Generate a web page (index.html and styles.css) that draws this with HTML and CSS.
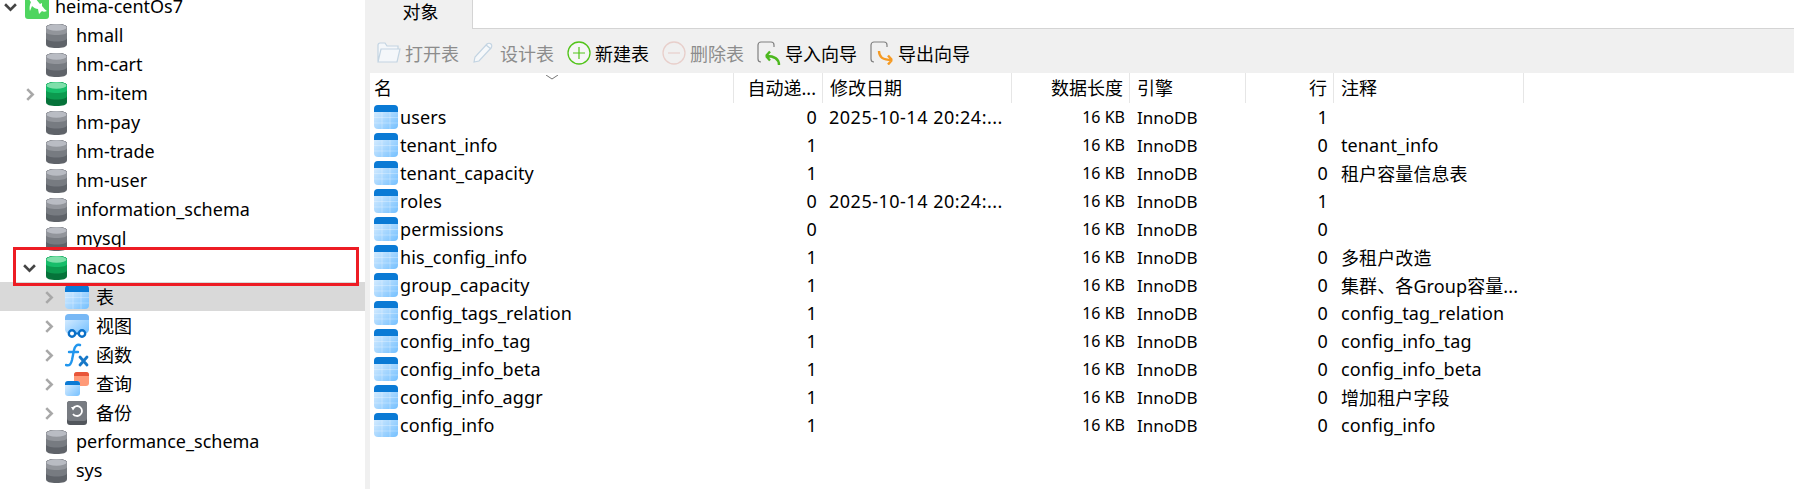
FILE: index.html
```
<!DOCTYPE html>
<html lang="zh-CN">
<head>
    <meta charset="UTF-8">
    <title>nacos</title>
    <link rel="stylesheet" href="styles.css">
</head>
<body>
    <svg class="defs" width="0" height="0">
        <defs>
            <linearGradient id="cellFill" x1="0" y1="0" x2="1" y2="1">
                <stop offset="0" stop-color="#e4f2ff"/>
                <stop offset="1" stop-color="#74c0ff"/>
            </linearGradient>
            <symbol id="db-gray" viewBox="0 0 21 24">
                <path d="M0 4C0 1 4 0 10.5 0S21 1 21 4v16c0 3-4 4-10.5 4S0 23 0 20z" fill="#5f6369"/>
                <path d="M0 4C0 1 4 0 10.5 0S21 1 21 4v10c0 2-4 3.500-10.500 3.500S0 16 0 14z" fill="#777b81"/>
                <path d="M0 4C0 1 4 0 10.5 0S21 1 21 4v4c0 2-4 3-10.500 3S0 10 0 8z" fill="#92959b"/>
                <ellipse cx="10.500" cy="3.500" rx="10" ry="3.200" fill="#b9bcc3"/>
            </symbol>
            <symbol id="db-green" viewBox="0 0 21 24">
                <path d="M0 4C0 1 4 0 10.5 0S21 1 21 4v16c0 3-4 4-10.500 4S0 23 0 20z" fill="#06733a"/>
                <path d="M0 4C0 1 4 0 10.5 0S21 1 21 4v10c0 2-4 3.500-10.500 3.500S0 16 0 14z" fill="#0c9a4f"/>
                <path d="M0 4C0 1 4 0 10.5 0S21 1 21 4v4c0 2-4 3-10.500 3S0 10 0 8z" fill="#17bd6a"/>
                <ellipse cx="10.500" cy="3.500" rx="10" ry="3.200" fill="#7fdfaa"/>
            </symbol>
            <symbol id="tbl" viewBox="0 0 24 24">
                <rect width="24" height="24" rx="4" fill="url(#cellFill)"/>
                <path d="M0 7V4a4 4 0 0 1 4-4h16a4 4 0 0 1 4 4v3z" fill="#0a7ad5"/>
                <path d="M8 7v17M16 7v17M0 12.500h24M0 18h24" stroke="#fff" stroke-opacity=".28" fill="none"/>
            </symbol>
        </defs>
    </svg>

    <div class="app">
        <aside class="tree">
            <div class="node">
                <svg class="chev open" viewBox="0 0 12 8"><path d="M1 1l5 5 5-5"/></svg>
                <svg class="ico-conn" viewBox="0 0 24 24">
                    <rect width="24" height="24" rx="3" fill="#4fd55f"/>
                    <path d="M3 2c2-1 5 0 7 1 2 2 3 4 5 6l2-1v3c2 2 3 4 5 5-2 1-4 1-5 0l-3 3-1-5c-2 0-4-1-6-3l-2 5C4 13 5 9 6 7 5 6 4 4 3 2z" fill="#fff"/>
                </svg>
                <span class="name">heima-centOs7</span>
            </div>
            <div class="node db"><svg class="ico-db"><use href="#db-gray"/></svg><span class="name">hmall</span></div>
            <div class="node db"><svg class="ico-db"><use href="#db-gray"/></svg><span class="name">hm-cart</span></div>
            <div class="node db"><svg class="chev" viewBox="0 0 8 12"><path d="M1 1l5 5-5 5"/></svg><svg class="ico-db"><use href="#db-green"/></svg><span class="name">hm-item</span></div>
            <div class="node db"><svg class="ico-db"><use href="#db-gray"/></svg><span class="name">hm-pay</span></div>
            <div class="node db"><svg class="ico-db"><use href="#db-gray"/></svg><span class="name">hm-trade</span></div>
            <div class="node db"><svg class="ico-db"><use href="#db-gray"/></svg><span class="name">hm-user</span></div>
            <div class="node db"><svg class="ico-db"><use href="#db-gray"/></svg><span class="name">information_schema</span></div>
            <div class="node db"><svg class="ico-db"><use href="#db-gray"/></svg><span class="name">mysql</span></div>
            <div class="node db"><svg class="chev open" viewBox="0 0 12 8"><path d="M1 1l5 5 5-5"/></svg><svg class="ico-db"><use href="#db-green"/></svg><span class="name">nacos</span></div>
            <div class="node sub selected">
                <svg class="chev" viewBox="0 0 8 12"><path d="M1 1l5 5-5 5"/></svg>
                <svg class="ico-sub"><use href="#tbl"/></svg>
                <span class="label">表</span>
            </div>
            <div class="node sub">
                <svg class="chev" viewBox="0 0 8 12"><path d="M1 1l5 5-5 5"/></svg>
                <svg class="ico-sub" viewBox="0 0 24 24">
                    <path d="M0 16V4a4 4 0 0 1 4-4h16a4 4 0 0 1 4 4v12a6 6 0 0 1-2 3H2a6 6 0 0 1-2-3z" fill="url(#cellFill)"/>
                    <path d="M0 6V4a4 4 0 0 1 4-4h16a4 4 0 0 1 4 4v2z" fill="#78b8f5"/>
                    <circle cx="7" cy="19.500" r="3.200" fill="#fff" stroke="#0a70c8" stroke-width="2.400"/>
                    <circle cx="17" cy="19.500" r="3.200" fill="#fff" stroke="#0a70c8" stroke-width="2.400"/>
                    <path d="M10 19.500h4" stroke="#0a70c8" stroke-width="2"/>
                </svg>
                <span class="label">视图</span>
            </div>
            <div class="node sub">
                <svg class="chev" viewBox="0 0 8 12"><path d="M1 1l5 5-5 5"/></svg>
                <svg class="ico-sub" viewBox="0 0 24 24">
                    <path d="M1 22c4 1 5-1 6-5l2-10c1-4 3-6 6-5M4 9h9" fill="none" stroke="#2196ee" stroke-width="2.400" stroke-linecap="round"/>
                    <path d="M15 14l7 8M22 14l-7 8" fill="none" stroke="#1778c8" stroke-width="2.800" stroke-linecap="round"/>
                </svg>
                <span class="label">函数</span>
            </div>
            <div class="node sub">
                <svg class="chev" viewBox="0 0 8 12"><path d="M1 1l5 5-5 5"/></svg>
                <svg class="ico-sub" viewBox="0 0 24 24">
                    <rect x="9" y="0" width="15" height="14" rx="3" fill="#ff9a78"/>
                    <path d="M9 4V3a3 3 0 0 1 3-3h9a3 3 0 0 1 3 3v1z" fill="#e8563a"/>
                    <rect x="0" y="9" width="15" height="15" rx="3" fill="#fff"/>
                    <rect x="0" y="9" width="15" height="15" rx="3" fill="url(#cellFill)"/>
                    <path d="M0 13v-1a3 3 0 0 1 3-3h9a3 3 0 0 1 3 3v1z" fill="#0a7ad5"/>
                </svg>
                <span class="label">查询</span>
            </div>
            <div class="node sub">
                <svg class="chev" viewBox="0 0 8 12"><path d="M1 1l5 5-5 5"/></svg>
                <svg class="ico-sub" viewBox="0 0 24 24">
                    <rect x="2" y="0" width="20" height="24" rx="3" fill="#52565c"/>
                    <rect x="2" y="0" width="20" height="20" rx="3" fill="#777b81"/>
                    <path d="M8 7a5 5 0 1 1 0 6" fill="none" stroke="#fff" stroke-width="1.800"/>
                    <path d="M6 6h4.500L8 9.500z" fill="#fff"/>
                </svg>
                <span class="label">备份</span>
            </div>
            <div class="node db"><svg class="ico-db"><use href="#db-gray"/></svg><span class="name">performance_schema</span></div>
            <div class="node db"><svg class="ico-db"><use href="#db-gray"/></svg><span class="name">sys</span></div>
            <div class="node"><span class="next-conn"></span></div>
        </aside>

        <main class="panel">
            <div class="tabs"><div class="tab">对象</div><div class="tab-rest"></div></div>
            <div class="toolbar">
                <div class="tool off">
                    <svg class="ico-tool" viewBox="0 0 24 22">
                        <path d="M1 19V3a2 2 0 0 1 2-2h5l2 3h11v3M1 20l3-13h19l-3 13z" fill="#f4f7fa" stroke="#c3d4e2" stroke-width="1.200"/>
                    </svg>
                    <span>打开表</span>
                </div>
                <div class="tool off">
                    <svg class="ico-tool" viewBox="0 0 24 22">
                        <path d="M2 20l1-5L15 2c1-1 3-1 4 0s1 3 0 4L7 19z" fill="#f6f8fa" stroke="#c3d4e2" stroke-width="1.200"/>
                        <path d="M14 3l5 4" stroke="#c3d4e2" stroke-width="1.200"/>
                    </svg>
                    <span>设计表</span>
                </div>
                <div class="tool">
                    <svg class="ico-tool" viewBox="0 0 24 24">
                        <circle cx="12" cy="12" r="11" fill="#fff" fill-opacity=".4" stroke="#52c41a" stroke-width="1.300"/>
                        <path d="M12 6v12M6 12h12" stroke="#52c41a" stroke-width="1.200"/>
                    </svg>
                    <span>新建表</span>
                </div>
                <div class="tool off">
                    <svg class="ico-tool" viewBox="0 0 24 24">
                        <circle cx="12" cy="12" r="11" fill="none" stroke="#e8cfcb" stroke-width="1.300"/>
                        <path d="M6 12h12" stroke="#e8cfcb" stroke-width="1.200"/>
                    </svg>
                    <span>删除表</span>
                </div>
                <div class="tool">
                    <svg class="ico-tool" viewBox="0 0 24 24">
                        <path d="M1 18V4a3 3 0 0 1 3-3h10a3 3 0 0 1 3 3v2M1 18a3 3 0 0 0 3 3" fill="none" stroke="#808080" stroke-width="1.200"/>
                        <path d="M22 24c0-6-4-9-13-9M9 15l4-4.500M9 15l4 4.500" fill="none" stroke="#4cb81e" stroke-width="2.400"/>
                    </svg>
                    <span>导入向导</span>
                </div>
                <div class="tool">
                    <svg class="ico-tool" viewBox="0 0 24 24">
                        <path d="M1 18V4a3 3 0 0 1 3-3h10a3 3 0 0 1 3 3v2M1 18a3 3 0 0 0 3 3" fill="none" stroke="#808080" stroke-width="1.200"/>
                        <path d="M9 10c0 6 3 9 13 9M22 19l-4-4.500M22 19l-4 4.500" fill="none" stroke="#f59a23" stroke-width="2.400"/>
                    </svg>
                    <span>导出向导</span>
                </div>
            </div>

            <div class="grid">
                <div class="row head">
                    <div class="cell first">名<svg class="sort" viewBox="0 0 12 5"><path d="M0 0l6 4 6-4"/></svg></div>
                    <div class="cell right">自动递...</div>
                    <div class="cell">修改日期</div>
                    <div class="cell right">数据长度</div>
                    <div class="cell">引擎</div>
                    <div class="cell right">行</div>
                    <div class="cell">注释</div>
                </div>
                <div class="row"><div class="cell first"><svg class="ico-tbl"><use href="#tbl"/></svg>users</div><div class="cell right">0</div><div class="cell date">2025-10-14 20:24:...</div><div class="cell right size">16 KB</div><div class="cell engine">InnoDB</div><div class="cell right">1</div><div class="cell"></div></div>
                <div class="row"><div class="cell first"><svg class="ico-tbl"><use href="#tbl"/></svg>tenant_info</div><div class="cell right">1</div><div class="cell"></div><div class="cell right size">16 KB</div><div class="cell engine">InnoDB</div><div class="cell right">0</div><div class="cell">tenant_info</div></div>
                <div class="row"><div class="cell first"><svg class="ico-tbl"><use href="#tbl"/></svg>tenant_capacity</div><div class="cell right">1</div><div class="cell"></div><div class="cell right size">16 KB</div><div class="cell engine">InnoDB</div><div class="cell right">0</div><div class="cell">租户容量信息表</div></div>
                <div class="row"><div class="cell first"><svg class="ico-tbl"><use href="#tbl"/></svg>roles</div><div class="cell right">0</div><div class="cell date">2025-10-14 20:24:...</div><div class="cell right size">16 KB</div><div class="cell engine">InnoDB</div><div class="cell right">1</div><div class="cell"></div></div>
                <div class="row"><div class="cell first"><svg class="ico-tbl"><use href="#tbl"/></svg>permissions</div><div class="cell right">0</div><div class="cell"></div><div class="cell right size">16 KB</div><div class="cell engine">InnoDB</div><div class="cell right">0</div><div class="cell"></div></div>
                <div class="row"><div class="cell first"><svg class="ico-tbl"><use href="#tbl"/></svg>his_config_info</div><div class="cell right">1</div><div class="cell"></div><div class="cell right size">16 KB</div><div class="cell engine">InnoDB</div><div class="cell right">0</div><div class="cell">多租户改造</div></div>
                <div class="row"><div class="cell first"><svg class="ico-tbl"><use href="#tbl"/></svg>group_capacity</div><div class="cell right">1</div><div class="cell"></div><div class="cell right size">16 KB</div><div class="cell engine">InnoDB</div><div class="cell right">0</div><div class="cell">集群、各Group容量...</div></div>
                <div class="row"><div class="cell first"><svg class="ico-tbl"><use href="#tbl"/></svg>config_tags_relation</div><div class="cell right">1</div><div class="cell"></div><div class="cell right size">16 KB</div><div class="cell engine">InnoDB</div><div class="cell right">0</div><div class="cell">config_tag_relation</div></div>
                <div class="row"><div class="cell first"><svg class="ico-tbl"><use href="#tbl"/></svg>config_info_tag</div><div class="cell right">1</div><div class="cell"></div><div class="cell right size">16 KB</div><div class="cell engine">InnoDB</div><div class="cell right">0</div><div class="cell">config_info_tag</div></div>
                <div class="row"><div class="cell first"><svg class="ico-tbl"><use href="#tbl"/></svg>config_info_beta</div><div class="cell right">1</div><div class="cell"></div><div class="cell right size">16 KB</div><div class="cell engine">InnoDB</div><div class="cell right">0</div><div class="cell">config_info_beta</div></div>
                <div class="row"><div class="cell first"><svg class="ico-tbl"><use href="#tbl"/></svg>config_info_aggr</div><div class="cell right">1</div><div class="cell"></div><div class="cell right size">16 KB</div><div class="cell engine">InnoDB</div><div class="cell right">0</div><div class="cell">增加租户字段</div></div>
                <div class="row"><div class="cell first"><svg class="ico-tbl"><use href="#tbl"/></svg>config_info</div><div class="cell right">1</div><div class="cell"></div><div class="cell right size">16 KB</div><div class="cell engine">InnoDB</div><div class="cell right">0</div><div class="cell">config_info</div></div>
            </div>
        </main>
    </div>

    <div class="red-box"></div>
</body>
</html>
```

FILE: styles.css
```
html, body {
    margin: 0;
    height: 489px;
    overflow: hidden;
    background: #fff;
}
body {
    font-family: "Noto Sans", "Noto Sans CJK SC", sans-serif;
    font-size: 18px;
    color: #000;
}
.defs {
    position: absolute;
}
.app {
    display: flex;
    height: 489px;
}

/* left tree */
.tree {
    width: 365px;
    flex: none;
    height: 497px;
    margin-top: -8px;
    overflow: hidden;
}
.node {
    position: relative;
    height: 29px;
    display: flex;
    align-items: center;
    box-sizing: border-box;
    padding-left: 25px;
}
.node.db {
    padding-left: 46px;
}
.node.sub {
    padding-left: 65px;
}
.node.selected {
    background: #d9d9d9;
}
.name {
    margin-left: 9px;
    margin-bottom: 2px;
    white-space: nowrap;
}
.label {
    margin-bottom: 2px;
}
.ico-conn {
    width: 24px;
    height: 24px;
    flex: none;
}
.node:first-child .name {
    margin-left: 6px;
}
.ico-db {
    width: 21px;
    height: 24px;
    flex: none;
}
.ico-sub {
    width: 24px;
    height: 24px;
    flex: none;
    margin-right: 7px;
}
.chev {
    position: absolute;
    fill: none;
    stroke: #a8a8a8;
    stroke-width: 2.400;
    width: 9px;
    height: 13px;
    left: 26px;
    top: 9px;
}
.sub .chev {
    left: 45px;
}
.chev.open {
    stroke: #444;
    width: 13px;
    height: 9px;
    left: 23px;
    top: 11px;
}
.node:first-child .chev.open {
    left: 4px;
}
.next-conn {
    display: block;
    width: 22px;
    height: 4px;
    margin-left: 1px;
    margin-top: 26px;
    background: #777;
}

/* right panel */
.panel {
    flex: 1;
    min-width: 0;
    background: #f0f0f0;
}
.tabs {
    height: 29px;
    display: flex;
}
.tab {
    width: 107px;
    text-align: center;
    line-height: 24px;
    box-sizing: border-box;
    padding-left: 4px;
}
.tab-rest {
    flex: 1;
    background: #fff;
    border-left: 1px solid #d4d4d4;
    border-bottom: 1px solid #d4d4d4;
}
.toolbar {
    height: 44px;
    display: flex;
    align-items: center;
    padding-left: 12px;
    padding-top: 4px;
    box-sizing: border-box;
}
.tool {
    display: flex;
    align-items: center;
    gap: 4px;
    margin-right: 13px;
}
.tool.off {
    color: #8c8c8c;
}
.ico-tool {
    width: 24px;
    height: 24px;
    flex: none;
}

/* object list */
.grid {
    margin-left: 5px;
    height: 416px;
    background: #fff;
}
.row {
    display: grid;
    grid-template-columns: 364px 89px 189px 118px 116px 88px 190px;
    height: 28px;
    align-items: center;
    white-space: nowrap;
    letter-spacing: .1px;
}
.row.head {
    height: 30px;
    align-items: stretch;
    letter-spacing: 0;
}
.cell {
    padding: 0 7px;
    display: flex;
    align-items: center;
    height: 28px;
    min-width: 0;
    box-sizing: border-box;
}
.right {
    justify-content: flex-end;
    padding-right: 6px;
}
.date {
    padding-left: 6px;
    letter-spacing: .5px;
}
.size {
    font-size: 16px;
    padding-right: 5px;
    letter-spacing: 0;
}
.engine {
    font-size: 17px;
    letter-spacing: 0;
}
.head .cell {
    height: 30px;
    padding-bottom: 2px;
    border-right: 1px solid #e6e6e6;
    position: relative;
}
.first {
    padding-left: 4px;
}
.ico-tbl {
    width: 24px;
    height: 24px;
    margin-right: 2px;
    flex: none;
}
.sort {
    position: absolute;
    left: 176px;
    top: 2px;
    width: 12px;
    height: 5px;
    fill: none;
    stroke: #777;
}

/* annotation */
.red-box {
    position: absolute;
    left: 13px;
    top: 247px;
    width: 340px;
    height: 33px;
    border: 3px solid #ed1c24;
}
```
